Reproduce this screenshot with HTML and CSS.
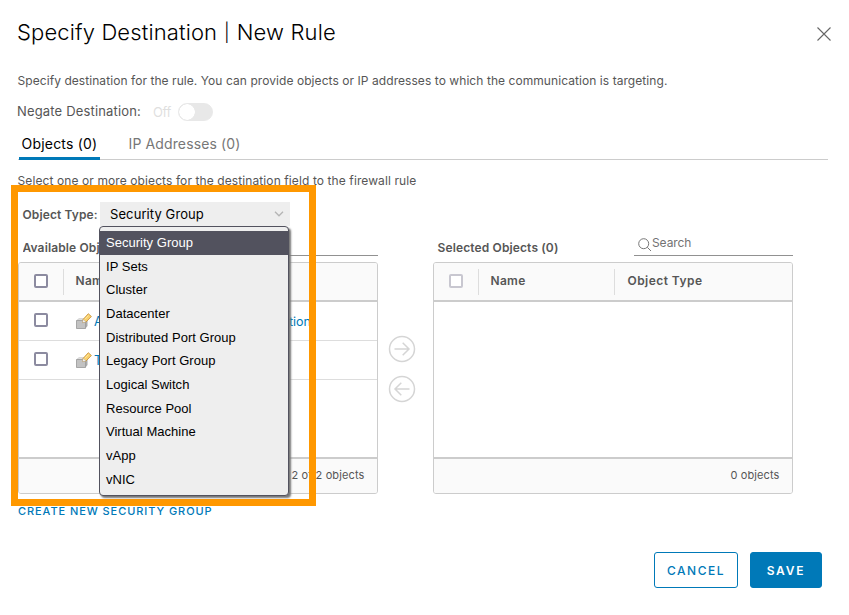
FILE: index.html
```html
<!DOCTYPE html>
<html lang="en">
<head>
<meta charset="utf-8">
<title>Specify Destination</title>
<link rel="stylesheet" href="styles.css">
</head>
<body>
<svg class="defs" width="0" height="0">
  <symbol id="group-icon" viewBox="0 0 16 16">
    <path d="M.5 7.500 2.800 5.500H11.500V13L9.500 15.500H.5Z" fill="#aaa"/>
    <path d="M1 7.500 3 5.500H11L9.500 7.500Z" fill="#dedede"/>
    <path d="M.5 7.500H9.500V15.500H.5Z" fill="#c2c2c2" stroke="#9c9c9c" stroke-width=".8"/>
    <path d="M7 6.500 12.300.7 15.400 3.500 10 9 6.700 9.600Z" fill="#f9d06c" stroke="#c58d32" stroke-width=".8"/>
    <path d="M7 6.500 10 9 6.700 9.600Z" fill="#fff" stroke="#aaa" stroke-width=".5"/>
    <path d="M9 6.200 12.500 2.500" stroke="#ffeaa0"/>
  </symbol>
</svg>
<main class="modal">
  <header class="modal-head">
    <h1>Specify Destination <span class="divider">|</span> New Rule</h1>
    <svg class="close" viewBox="0 0 14 14"><path d="M.5.500 13.500 13.500M13.500.500.500 13.500"/></svg>
  </header>
  <p class="description">Specify destination for the rule. You can provide objects or IP addresses to which the communication is targeting.</p>
  <div class="negate"><span class="negate-label">Negate Destination:</span><span class="off">Off</span><span class="toggle"></span></div>
  <nav class="tabs"><span class="tab active">Objects (0)</span><span class="tab">IP Addresses (0)</span></nav>
  <p class="hint">Select one or more objects for the destination field to the firewall rule</p>

  <div class="type-row">
    <span class="type-label">Object Type:</span>
    <div class="select"><span>Security Group</span>
      <svg class="chevron" viewBox="0 0 10 6"><path d="M1 .8 5 4.800 9 .8"/></svg>
      <ul class="menu">
        <li class="selected">Security Group</li><li>IP Sets</li><li>Cluster</li><li>Datacenter</li><li>Distributed Port Group</li><li>Legacy Port Group</li><li>Logical Switch</li><li>Resource Pool</li><li>Virtual Machine</li><li>vApp</li><li>vNIC</li>
      </ul>
    </div>
  </div>

  <div class="transfer">
    <section class="panel">
      <div class="panel-head available"><h2>Available Objects</h2><div class="search"></div></div>
      <div class="grid">
        <div class="grid-head"><span class="check-cell"><i class="check"></i></span><span class="name-head left-name">Name</span></div>
        <div class="grid-body">
          <div class="row"><span class="check-cell"><i class="check"></i></span><svg class="object-icon"><use href="#group-icon"/></svg><a class="link"><span>A</span><span>tion</span></a></div>
          <div class="row"><span class="check-cell"><i class="check"></i></span><svg class="object-icon"><use href="#group-icon"/></svg><a class="link">T</a></div>
        </div>
        <div class="grid-foot">2 of 2 objects</div>
      </div>
    </section>
    <div class="arrows">
      <svg viewBox="0 0 28 28"><circle cx="14" cy="14" r="12.500"/><path d="M6.500 14H21M14.700 7.700 21 14 14.700 20.300"/></svg>
      <svg viewBox="0 0 28 28"><circle cx="14" cy="14" r="12.500"/><path d="M21.500 14H7M13.300 7.700 7 14 13.300 20.300"/></svg>
    </div>
    <section class="panel">
      <div class="panel-head"><h2>Selected Objects (0)</h2><div class="search"><svg viewBox="0 0 14 14"><circle cx="5.700" cy="5.700" r="5"/><path d="M9.300 9.300 13 13"/></svg><span>Search</span></div></div>
      <div class="grid">
        <div class="grid-head"><span class="check-cell"><i class="check disabled"></i></span><span class="name-head right-name">Name</span><span class="type-head">Object Type</span></div>
        <div class="grid-body"></div>
        <div class="grid-foot">0 objects</div>
      </div>
    </section>
  </div>
  <a class="create">CREATE NEW SECURITY GROUP</a>
  <footer><button class="cancel">CANCEL</button><button class="save">SAVE</button></footer>
  <div class="highlight"></div>
</main>
</body>
</html>
```
FILE: styles.css
```css
* { box-sizing: border-box; }
body { margin: 0; background: #fff; color: #565656; font: 12px/20px Inter, sans-serif; }
h1, h2, p, ul { margin: 0; padding: 0; font-weight: 400; }
.defs { position: absolute; }
.modal { position: relative; width: 849px; height: 615px; padding: 17px 18px 0; overflow: hidden; }
.modal-head { display: flex; justify-content: space-between; height: 54px; }
h1 { margin-left: -1px; font-size: 22px; line-height: 30px; font-weight: 300; letter-spacing: .13px; color: #000; }
.divider { display: inline-block; width: 7px; font-size: 18px; text-align: center; vertical-align: 1px; line-height: 20px; }
.close { width: 14px; height: 14px; margin-top: 10px; fill: none; stroke: #666; stroke-width: 1.1; }
.description { height: 30px; margin-left: -.5px; letter-spacing: .065px; }
.negate { display: flex; height: 31px; font-size: 13px; letter-spacing: .165px; }
.negate-label { width: 136px; margin-left: -1px; }
.off { width: 25px; padding-top: 1px; color: #dfdfdf; letter-spacing: -.4px; }
.toggle { width: 35px; height: 18px; margin-top: 2px; border: 1px solid #e8e8e8; border-radius: 9px; background: radial-gradient(circle at 8px 8px, #fff 7.500px, #e8e8e8 8px); }
.tabs { display: flex; gap: 25px; width: 810px; height: 28px; border-bottom: 1px solid #ccc; font-size: 14px; }
.tab { height: 28px; padding: 2px 3.500px 0; color: #777; letter-spacing: .123px; }
.tab.active { width: 81px; padding-left: 2.500px; margin-left: 1px; border-bottom: 3px solid #0079b8; color: #000; letter-spacing: .2px; white-space: nowrap; }
.hint { height: 42px; margin-left: -.5px; padding-top: 11px; letter-spacing: .1px; }
.type-row { display: flex; height: 36px; padding-left: 4.500px; }
.type-label { width: 77.500px; padding-top: 3px; font-weight: 600; letter-spacing: .12px; white-space: nowrap; }
.select { position: relative; display: flex; align-items: center; justify-content: space-between; width: 190px; height: 24px; padding: 0 6px 0 10px; background: #eee; color: #000; font-size: 13px; letter-spacing: .095px; }
.chevron { width: 10px; height: 6px; fill: none; stroke: #b4b4b4; stroke-width: 1.3; }
.menu { position: absolute; z-index: 2; top: 24px; left: -1px; width: 190px; height: 270px; padding: 4px 0; border: 1px solid #52525e; border-radius: 4px; background: #eee; box-shadow: 2px 2px 2px #777; font: 13px/23.660px "Liberation Sans", sans-serif; letter-spacing: .02px; list-style: none; }
.menu li { height: 23.660px; padding-left: 6px; }
.menu .selected { background: #52525e; color: #fff; }
.transfer { display: flex; }
.panel { width: 360px; }
.panel-head { display: flex; justify-content: space-between; height: 24px; padding-left: 4.500px; }
.panel-head h2 { font-size: 12px; font-weight: 600; letter-spacing: .13px; white-space: nowrap; }
.available h2 { width: 76px; overflow: hidden; }
.search { display: flex; width: 159px; height: 18px; border-bottom: 1px solid #919191; padding-left: 4px; color: #737373; letter-spacing: -.08px; }
.search svg { width: 14px; height: 14px; fill: none; stroke: #777; stroke-width: 1; }
.search span { margin-top: -5px; }
.grid { height: 232px; border: 1px solid #ccc; border-radius: 3px; overflow: hidden; }
.grid-head { display: flex; align-items: center; height: 39px; border-bottom: 2px solid #ccc; background: #fafafa; font-weight: 600; }
.check-cell { display: flex; align-items: center; width: 44px; padding: 0 0 2px 15px; }
.check { width: 14px; height: 14px; border: 2px solid #8c8ba0; border-radius: 2px; background: #fff; }
.check.disabled { border-color: #c8c7d0; }
.name-head, .type-head { height: 26px; padding-left: 12px; border-left: 1px solid #ddd; line-height: 24px; letter-spacing: .3px; }
.name-head { padding-left: 11.500px; }
.right-name { width: 136px; }
.type-head { padding-left: 12.500px; letter-spacing: .45px; }
.grid-body { height: 155px; }
.row { display: flex; align-items: center; height: 39px; border-bottom: 1px solid #ddd; }
.object-icon { width: 16px; height: 16px; margin: 0 2px 0 13px; }
.link { display: flex; justify-content: space-between; width: 217px; padding-top: 1px; color: #0079b8; font-size: 12.500px; }
.grid-foot { height: 36px; padding: 6px 12.500px 0; border-top: 2px solid #ccc; background: #fafafa; text-align: right; font-size: 11px; letter-spacing: .12px; }
.arrows { display: flex; flex-direction: column; gap: 12px; width: 55px; padding: 97px 0 0 10px; }
.arrows svg { width: 28px; height: 28px; fill: none; stroke: #d5d5d5; stroke-width: 1.5; }
.create { display: block; height: 58px; padding-top: 7px; color: #0079b8; font-size: 11px; font-weight: 500; letter-spacing: .93px; }
footer { display: flex; justify-content: flex-end; gap: 12px; padding-right: 9px; }
button { height: 36px; padding: 0; border: 1px solid #0079b8; border-radius: 3px; background: #fff; color: #0079b8; font: 500 12px Inter, sans-serif; letter-spacing: 1.500px; }
.cancel { width: 84px; }
.save { width: 72px; background: #0079b8; color: #fff; font-weight: 600; letter-spacing: 1.800px; }
.highlight { position: absolute; z-index: 1; top: 185px; left: 11px; width: 305px; height: 321px; border: 7px solid #ff9800; }
```
